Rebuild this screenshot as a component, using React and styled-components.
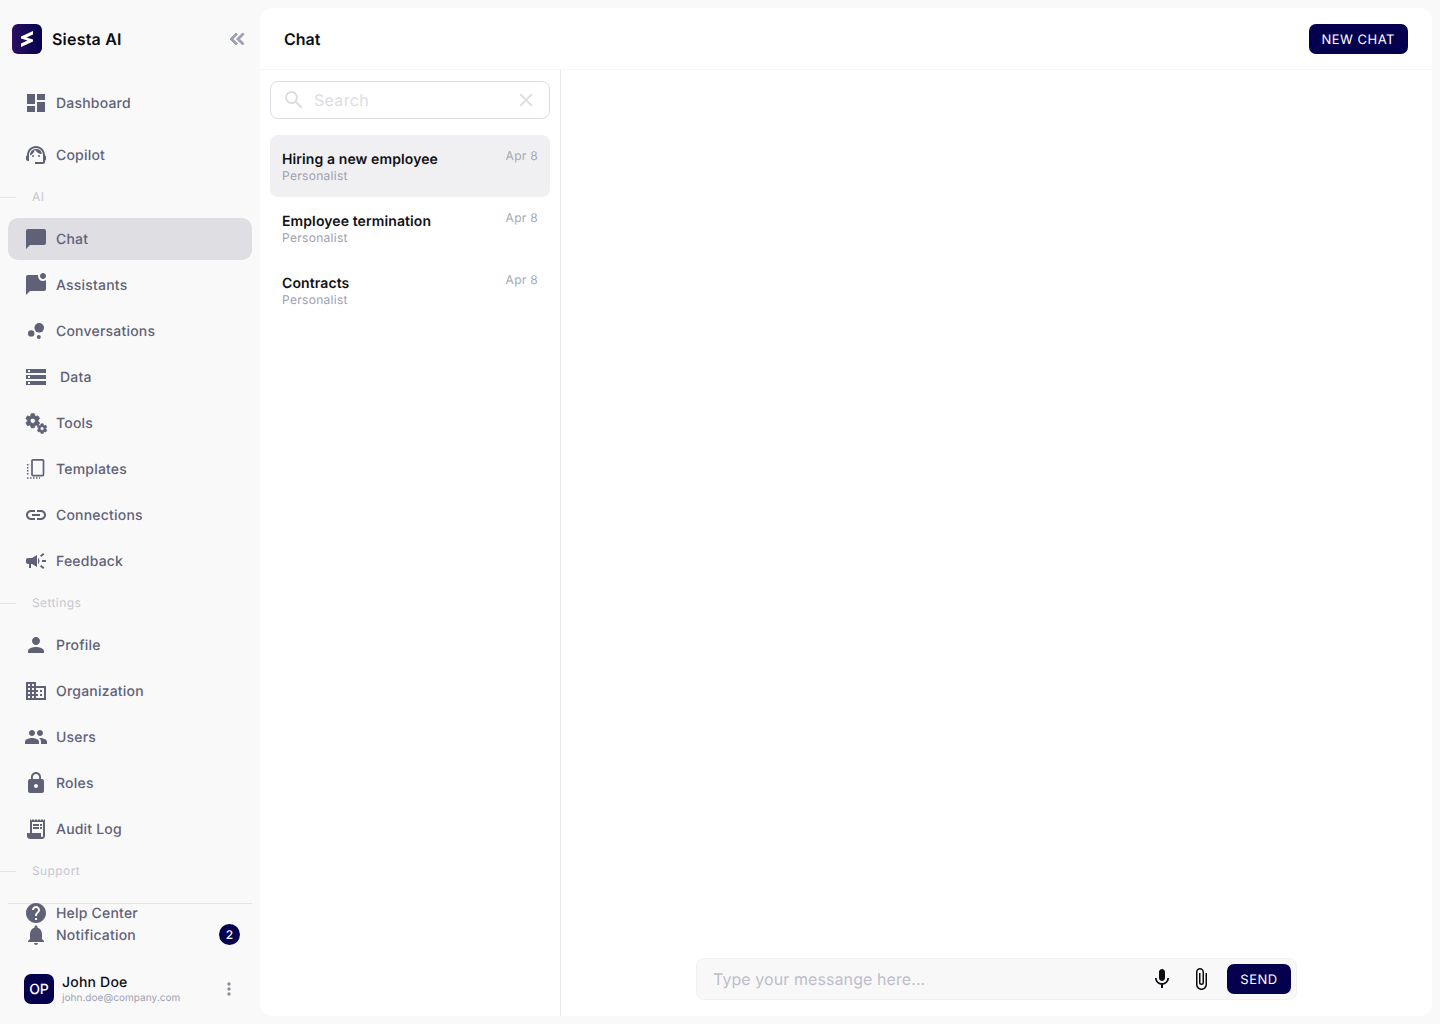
import React from "react";
import styled, { createGlobalStyle } from "styled-components";
import {
  MdDashboard,
  MdSupportAgent,
  MdChatBubble,
  MdMarkChatUnread,
  MdBubbleChart,
  MdStorage,
  MdSettings,
  MdOutlineLink,
  MdCampaign,
  MdPerson,
  MdDomain,
  MdPeople,
  MdLock,
  MdReceiptLong,
  MdHelp,
  MdNotifications,
  MdMic,
  MdAttachFile,
  MdSearch,
  MdClose,
  MdMoreVert,
  MdKeyboardDoubleArrowLeft,
} from "react-icons/md";

const GlobalStyle = createGlobalStyle`
  * { box-sizing: border-box; }
  html, body { margin: 0; padding: 0; }
  body {
    background: #f9f9fa;
    font-family: Inter, "Liberation Sans", sans-serif;
    text-rendering: geometricPrecision;
  }
`;

const Page = styled.div`
  width: 1440px;
  height: 1024px;
  display: flex;
  overflow: hidden;
  background: #f9f9fa;
`;

const Sidebar = styled.aside`
  width: 260px;
  flex-shrink: 0;
  display: flex;
  flex-direction: column;
`;

const Brand = styled.div`
  height: 78px;
  padding: 0 12px;
  display: flex;
  align-items: center;
  gap: 10px;
`;

const LogoBox = styled.div`
  width: 30px;
  height: 30px;
  border-radius: 6px;
  background: linear-gradient(90deg, #2a1060, #05004e);
  display: flex;
  align-items: center;
  justify-content: center;
`;

const BrandName = styled.span`
  font-size: 16px;
  font-weight: 600;
  color: #0c0c10;
  letter-spacing: 0.2px;
`;

const Collapse = styled.button`
  margin-left: auto;
  margin-right: -1px;
  border: none;
  background: none;
  padding: 0;
  display: flex;
  color: #9d9fae;
  font-size: 24px;
  path:not([fill="none"]) { stroke: currentColor; stroke-width: 1; }
`;

const Nav = styled.nav`
  display: flex;
  flex-direction: column;
  padding-top: 4px;
`;

const Row = styled.div`
  height: 42px;
  margin: 0 8px ${(p) => p.$after || 0}px;
  padding: 0 16px;
  display: flex;
  align-items: center;
  gap: ${(p) => p.$gap || 8}px;
  border-radius: 10px;
  background: ${(p) => (p.$active ? "#dedee3" : "transparent")};
  color: #5f6177;
  font-size: 14px;
  font-weight: 500;
  letter-spacing: 0.2px;
  svg { flex-shrink: 0; }
`;

const IconSlot = styled.span`
  width: 24px;
  height: 24px;
  display: flex;
  align-items: center;
  justify-content: center;
  font-size: 24px;
`;

const Section = styled.div`
  height: 42px;
  display: flex;
  align-items: center;
  gap: 16px;
  color: #c6c7d0;
  font-size: 12px;
  font-weight: 400;
  letter-spacing: 0.4px;
`;

const SectionLine = styled.span`
  width: 16px;
  height: 1px;
  background: #e3e3e8;
`;

const SectionText = styled.span`
  margin-bottom: 2px;
`;

const Divider = styled.div`
  height: 1px;
  margin: 11px 8px -2px;
  background: #e3e3e8;
`;

const SmallRow = styled(Row)`
  height: 22px;
  padding-right: 12px;
`;

const Badge = styled.span`
  margin-left: auto;
  margin-bottom: 1px;
  width: 21px;
  height: 21px;
  border-radius: 50%;
  background: #05004e;
  color: #fff;
  font-size: 12px;
  font-weight: 500;
  letter-spacing: 0;
  display: flex;
  align-items: center;
  justify-content: center;
`;

const UserRow = styled.div`
  margin-top: 27px;
  padding: 0 21px 0 24px;
  display: flex;
  align-items: center;
  gap: 8px;
`;

const Avatar = styled.div`
  width: 30px;
  height: 30px;
  border-radius: 7px;
  background: #05004e;
  color: #fff;
  font-size: 14px;
  font-weight: 500;
  display: flex;
  align-items: center;
  justify-content: center;
`;

const UserText = styled.div`
  margin-top: 1px;
  display: flex;
  flex-direction: column;
`;

const UserName = styled.span`
  font-size: 14px;
  font-weight: 500;
  line-height: 17px;
  color: #0c0c10;
  letter-spacing: 0.2px;
`;

const UserMail = styled.span`
  font-size: 10px;
  line-height: 14px;
  color: #9d9fae;
  letter-spacing: 0.05px;
`;

const MoreButton = styled.span`
  margin-left: auto;
  display: flex;
  font-size: 20px;
  color: #8b8d9e;
`;

const Main = styled.main`
  width: 1172px;
  height: 1008px;
  margin-top: 8px;
  background: #fff;
  border-radius: 12px;
  display: flex;
  flex-direction: column;
  overflow: hidden;
`;

const Header = styled.header`
  height: 62px;
  padding: 0 24px;
  display: flex;
  align-items: center;
  justify-content: space-between;
  border-bottom: 1px solid #f6f6f8;
`;

const Title = styled.h1`
  margin: 0;
  font-size: 16px;
  font-weight: 600;
  color: #0c0c10;
`;

const DarkButton = styled.button`
  height: 30px;
  padding: 2px 13px 0;
  border: none;
  border-radius: 7px;
  background: #05004e;
  color: #fff;
  font-family: inherit;
  font-size: 13px;
  font-weight: 400;
  letter-spacing: 0.5px;
  text-rendering: geometricPrecision;
`;

const SendButton = styled(DarkButton)`
  width: 64px;
  padding: 1px 0 0;
`;

const Body = styled.div`
  flex: 1;
  display: flex;
  min-height: 0;
`;

const ListPane = styled.div`
  width: 301px;
  padding: 11px 10px 0;
  border-right: 1px solid #ebebef;
  display: flex;
  flex-direction: column;
`;

const SearchBox = styled.div`
  height: 38px;
  margin-bottom: 16px;
  padding: 0 12px 0 11px;
  border: 1px solid #dcdce2;
  border-radius: 8px;
  display: flex;
  align-items: center;
  gap: 8px;
  color: #dcdde3;
`;

const SearchText = styled.span`
  flex: 1;
  font-size: 16px;
  letter-spacing: 0.3px;
`;

const ChatItem = styled.div`
  height: 62px;
  padding: 14px 12px 0;
  border-radius: 8px;
  background: ${(p) => (p.$active ? "#f0f0f3" : "transparent")};
  display: flex;
  justify-content: space-between;
`;

const ChatText = styled.div`
  display: flex;
  flex-direction: column;
`;

const ChatTitle = styled.span`
  font-size: 14px;
  line-height: 21px;
  font-weight: 600;
  color: #111116;
  letter-spacing: 0.1px;
`;

const ChatSub = styled.span`
  margin-top: -1px;
  font-size: 12px;
  line-height: 13px;
  color: #9d9fae;
  letter-spacing: 0.3px;
`;

const ChatDate = styled.span`
  margin-top: -1px;
  font-size: 12px;
  line-height: 16px;
  color: #a6a7b5;
  letter-spacing: 0.3px;
`;

const Conversation = styled.div`
  flex: 1;
  display: flex;
  flex-direction: column;
  justify-content: flex-end;
  align-items: center;
  padding-bottom: 16px;
`;

const Composer = styled.div`
  width: 601px;
  height: 42px;
  padding: 0 5px 0 16px;
  border: 1px solid #f1f1f4;
  border-radius: 8px;
  background: #f8f8f9;
  display: flex;
  align-items: center;
`;

const ComposerText = styled.span`
  flex: 1;
  font-size: 16px;
  color: #bdbec9;
  letter-spacing: 0.08px;
`;

const ComposerIcon = styled.span`
  display: flex;
  color: #0c0c10;
  font-size: 24px;
  margin-right: ${(p) => p.$after}px;
`;

const ToolsSvg = styled.svg`
  path:not([fill="none"]) { stroke: currentColor; stroke-width: 1.2; }
`;

const LogoMark = () => (
  <svg width="14" height="16" viewBox="0 0 14 16">
    <path d="M1 5.500 13 0v3.500L6.500 6.600 13 8.500v2L1 16v-3.500l6.500-3.100L1 7.500Z" fill="#fff" />
  </svg>
);

const ToolsIcon = () => (
  <ToolsSvg width="24" height="24" viewBox="0 0 24 24">
    <MdSettings x="0" y="1" size={17.500} />
    <MdSettings x="12" y="11.500" size={12.200} />
  </ToolsSvg>
);

const TemplatesIcon = () => (
  <svg width="24" height="24" viewBox="0 0 24 24" fill="none" stroke="currentColor">
    <rect x="8" y="2.800" width="11.500" height="15.800" rx="1" strokeWidth="1.700" />
    <path d="M3.700 7v12" strokeWidth="1.500" strokeDasharray="1.500 1.500" />
    <path d="M3 21h13" strokeWidth="1.500" strokeDasharray="1.500 1.500" />
  </svg>
);

const Item = ({ icon, label, gap, active, after }) => (
  <Row $gap={gap} $active={active} $after={after}>
    <IconSlot>{icon}</IconSlot>
    {label}
  </Row>
);

const Label = ({ children }) => (
  <Section>
    <SectionLine />
    <SectionText>{children}</SectionText>
  </Section>
);

const chats = ["Hiring a new employee", "Employee termination", "Contracts"];

const App = () => (
  <>
    <GlobalStyle />
    <Page>
      <Sidebar>
        <Brand>
          <LogoBox>
            <LogoMark />
          </LogoBox>
          <BrandName>Siesta AI</BrandName>
          <Collapse>
            <MdKeyboardDoubleArrowLeft />
          </Collapse>
        </Brand>
        <Nav>
          <Item icon={<MdDashboard />} label="Dashboard" after={10} />
          <Item icon={<MdSupportAgent />} label="Copilot" />
          <Label>AI</Label>
          <Item icon={<MdChatBubble />} label="Chat" active after={4} />
          <Item icon={<MdMarkChatUnread />} label="Assistants" after={4} />
          <Item icon={<MdBubbleChart />} label="Conversations" after={4} />
          <Item icon={<MdStorage />} label="Data" gap={12} after={4} />
          <Item icon={<ToolsIcon />} label="Tools" after={4} />
          <Item icon={<TemplatesIcon />} label="Templates" after={4} />
          <Item icon={<MdOutlineLink />} label="Connections" after={4} />
          <Item icon={<MdCampaign />} label="Feedback" />
          <Label>Settings</Label>
          <Item icon={<MdPerson />} label="Profile" after={4} />
          <Item icon={<MdDomain />} label="Organization" after={4} />
          <Item icon={<MdPeople />} label="Users" after={4} />
          <Item icon={<MdLock />} label="Roles" after={4} />
          <Item icon={<MdReceiptLong />} label="Audit Log" />
          <Label>Support</Label>
        </Nav>
        <Divider />
        <SmallRow>
          <IconSlot>
            <MdHelp />
          </IconSlot>
          Help Center
        </SmallRow>
        <SmallRow>
          <IconSlot>
            <MdNotifications />
          </IconSlot>
          Notification
          <Badge>2</Badge>
        </SmallRow>
        <UserRow>
          <Avatar>OP</Avatar>
          <UserText>
            <UserName>John Doe</UserName>
            <UserMail>john.doe@company.com</UserMail>
          </UserText>
          <MoreButton>
            <MdMoreVert />
          </MoreButton>
        </UserRow>
      </Sidebar>
      <Main>
        <Header>
          <Title>Chat</Title>
          <DarkButton>NEW CHAT</DarkButton>
        </Header>
        <Body>
          <ListPane>
            <SearchBox>
              <MdSearch size={24} />
              <SearchText>Search</SearchText>
              <MdClose size={22} />
            </SearchBox>
            {chats.map((title, i) => (
              <ChatItem key={title} $active={i === 0}>
                <ChatText>
                  <ChatTitle>{title}</ChatTitle>
                  <ChatSub>Personalist</ChatSub>
                </ChatText>
                <ChatDate>Apr 8</ChatDate>
              </ChatItem>
            ))}
          </ListPane>
          <Conversation>
            <Composer>
              <ComposerText>Type your messange here...</ComposerText>
              <ComposerIcon $after={15}>
                <MdMic />
              </ComposerIcon>
              <ComposerIcon $after={14}>
                <MdAttachFile />
              </ComposerIcon>
              <SendButton>SEND</SendButton>
            </Composer>
          </Conversation>
        </Body>
      </Main>
    </Page>
  </>
);

export default App;
